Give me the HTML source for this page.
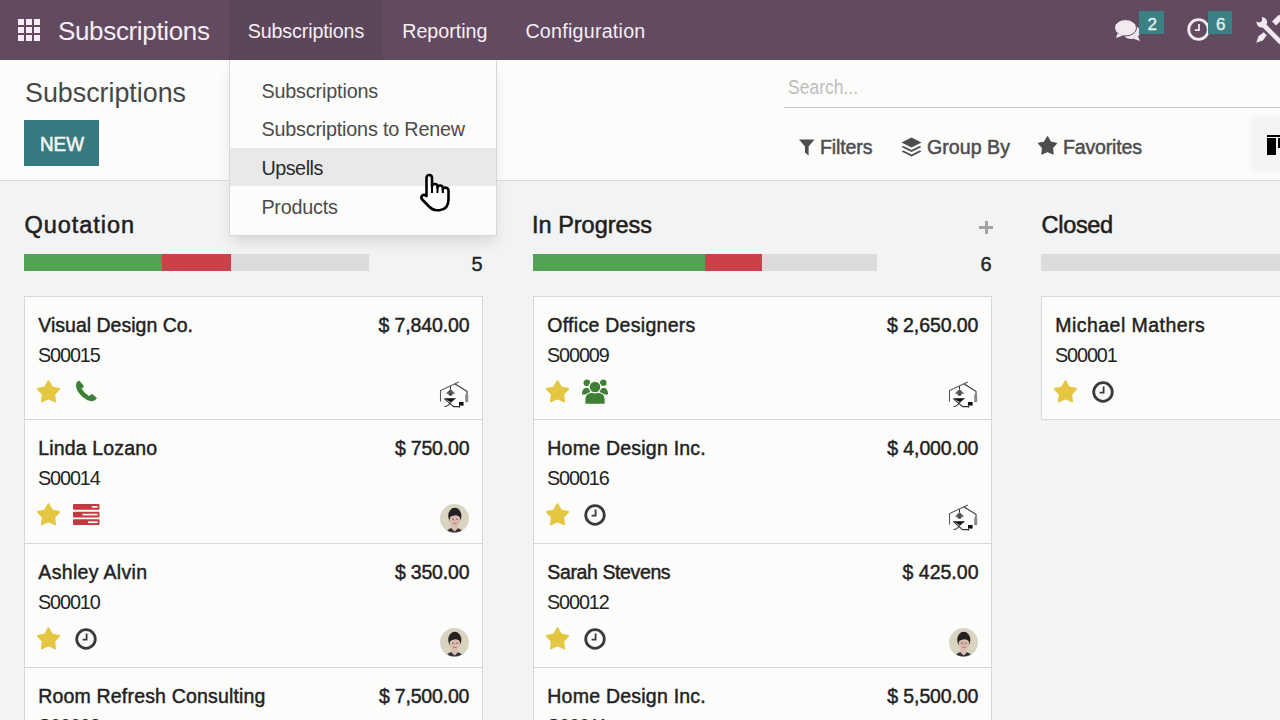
<!DOCTYPE html>
<html><head><meta charset="utf-8">
<style>
*{margin:0;padding:0;box-sizing:border-box}
html,body{width:1280px;height:720px;overflow:hidden;background:#f2f3f4;font-family:"Liberation Sans",sans-serif}
.a{position:absolute;white-space:nowrap;line-height:1}
#nav{position:absolute;left:0;top:0;width:1280px;height:60px;background:#624b60}
#navact{position:absolute;left:229px;top:0;width:154px;height:60px;background:#5c4659}
#cp{position:absolute;left:0;top:60px;width:1280px;height:121px;background:#fcfcfb;border-bottom:1px solid #d9d9db}
.card{position:absolute;width:459px;background:#fcfcfb;border:1px solid #d7d8da}
#dd{position:absolute;left:229px;top:60px;width:268px;height:176px;background:#fcfcfb;border:1px solid #d6d6d6;border-top:none;box-shadow:0 8px 14px -3px rgba(0,0,0,.13)}
</style></head><body>
<div id="nav"><div id="navact"></div>
<svg class="a" style="left:18px;top:19px" width="22" height="22" viewBox="0 0 22 22" fill="#f4edf2"><rect x="0" y="0" width="6" height="6"/><rect x="8" y="0" width="6" height="6"/><rect x="16" y="0" width="6" height="6"/><rect x="0" y="8" width="6" height="6"/><rect x="8" y="8" width="6" height="6"/><rect x="16" y="8" width="6" height="6"/><rect x="0" y="16" width="6" height="6"/><rect x="8" y="16" width="6" height="6"/><rect x="16" y="16" width="6" height="6"/></svg>
<div class="a" style="left:58.00px;top:18.29px;font-size:26px;color:#f6eef4;font-weight:normal;letter-spacing:-0.342px;">Subscriptions</div>
<div class="a" style="left:247.70px;top:21.72px;font-size:19.7px;color:#f6eef4;font-weight:normal;letter-spacing:-0.133px;">Subscriptions</div>
<div class="a" style="left:402.20px;top:21.72px;font-size:19.7px;color:#f6eef4;font-weight:normal;letter-spacing:-0.013px;">Reporting</div>
<div class="a" style="left:525.40px;top:21.72px;font-size:19.7px;color:#f6eef4;font-weight:normal;letter-spacing:0.233px;">Configuration</div>
<svg class="a" style="left:1113px;top:18px" width="30" height="25" viewBox="0 0 30 25"><path d="M16 7.5 Q23 6 26.5 11 Q28 15 25 18.5 L27 23 L20.5 20.8 Q14 21.5 11 18 Z" fill="#efe6ec"/><ellipse cx="12.5" cy="9.8" rx="11" ry="8.2" fill="#f2eaef" stroke="#4e3c4c" stroke-width="0.9"/><path d="M4.5 15.5 L3 20 L10.5 17.2 Z" fill="#f2eaef"/></svg>
<div class="a" style="left:1139px;top:11px;width:25px;height:23px;background:#3b8084"></div>
<svg class="a" style="left:1187px;top:18px" width="23" height="23" viewBox="0 0 23 23"><circle cx="11.5" cy="11.5" r="9.8" fill="none" stroke="#f3eaf0" stroke-width="2.8"/><path d="M12 6V12.2H7.8" fill="none" stroke="#f3eaf0" stroke-width="1.8"/></svg>
<div class="a" style="left:1208px;top:11px;width:24px;height:23px;background:#3b8084"></div>
<svg class="a" style="left:1245px;top:10px" width="35" height="35" viewBox="0 0 35 35"><g fill="#f3e9f1"><path d="M18 14.5 L36 32.5" stroke="#f3e9f1" stroke-width="4.6"/><circle cx="16.8" cy="12.2" r="5.3"/><path d="M29 13.5 L36 6.5" stroke="#f3e9f1" stroke-width="5.6"/><path d="M11.2 32.8 L13.6 26.2 L18.8 22.2 L21.8 25.2 L17.8 30.4 Z"/></g><circle cx="14" cy="9.2" r="3.1" fill="#624b60"/><path d="M14 9.2 L10 5 L15.8 4.5 Z" fill="#624b60"/></svg>
<div class="a" style="left:1147.50px;top:15.61px;font-size:17px;color:#e6f3f0;font-weight:normal;letter-spacing:0.000px;-webkit-text-stroke:0.3px #e6f3f0;">2</div>
<div class="a" style="left:1216.00px;top:15.61px;font-size:17px;color:#e6f3f0;font-weight:normal;letter-spacing:0.000px;-webkit-text-stroke:0.3px #e6f3f0;">6</div>
</div>
<div id="cp"></div>
<div class="a" style="left:24.90px;top:77.67px;font-size:28.5px;color:#474747;font-weight:normal;letter-spacing:0.000px;transform:scaleX(0.9410);transform-origin:0.00px 0;">Subscriptions</div>
<div class="a" style="left:24px;top:120px;width:75px;height:46px;background:#37797e"></div>
<div class="a" style="left:39.90px;top:134.47px;font-size:20px;color:#f4f6f6;font-weight:normal;letter-spacing:0.000px;-webkit-text-stroke:0.6px #f4f6f6;transform:scaleX(0.9422);transform-origin:0.00px 0;">NEW</div>
<div class="a" style="left:784px;top:106.5px;width:496px;height:1px;background:#c9c9cb"></div>
<div class="a" style="left:788.00px;top:77.07px;font-size:20px;color:#bdbdbe;font-weight:normal;letter-spacing:0.000px;transform:scaleX(0.8750);transform-origin:0.00px 0;">Search...</div>
<svg class="a" style="left:799px;top:139px" width="16" height="17" viewBox="0 0 16 17"><path d="M0 0.5 H15.5 L9.6 7.5 V16.5 L6 13.5 V7.5 Z" fill="#4d4d4f"/></svg>
<div class="a" style="left:820.00px;top:137.71px;font-size:19.6px;color:#4d4d4f;font-weight:normal;letter-spacing:-0.150px;-webkit-text-stroke:0.5px #4d4d4f;">Filters</div>
<svg class="a" style="left:901px;top:137px" width="21" height="20" viewBox="0 0 21 20"><path d="M10.5 0.5 L20.5 5.5 L10.5 10.5 L0.5 5.5 Z" fill="#4d4d4f"/><path d="M2.5 9 L0.5 10 L10.5 15 L20.5 10 L18.5 9 L10.5 13 Z" fill="#4d4d4f"/><path d="M2.5 13.5 L0.5 14.5 L10.5 19.5 L20.5 14.5 L18.5 13.5 L10.5 17.5 Z" fill="#4d4d4f"/></svg>
<div class="a" style="left:927.00px;top:137.71px;font-size:19.6px;color:#4d4d4f;font-weight:normal;letter-spacing:0.029px;-webkit-text-stroke:0.5px #4d4d4f;">Group By</div>
<svg class="a" style="left:1038px;top:136px" width="19" height="19" viewBox="0 0 23 23" fill="#4d4d4f" stroke="#4d4d4f"><polygon points="11.50,1.00 15.14,7.38 22.34,8.88 17.40,14.32 18.20,21.62 11.50,18.60 4.80,21.62 5.60,14.32 0.66,8.88 7.86,7.38" stroke-linejoin="round" stroke-width="1.6"/></svg>
<div class="a" style="left:1063.00px;top:137.71px;font-size:19.6px;color:#4d4d4f;font-weight:normal;letter-spacing:-0.200px;-webkit-text-stroke:0.5px #4d4d4f;">Favorites</div>
<div class="a" style="left:1254px;top:120px;width:30px;height:49px;background:#f3f3f3;box-shadow:0 0 6px 3px #f3f3f3"></div>
<div class="a" style="left:1266.5px;top:135px;width:14px;height:2px;background:#000"></div><div class="a" style="left:1266.5px;top:138.2px;width:9px;height:16.8px;background:#000"></div><div class="a" style="left:1277.7px;top:138.2px;width:3px;height:10px;background:#000"></div><div class="a" style="left:24.60px;top:213.51px;font-size:23.5px;color:#1f1f1f;font-weight:normal;letter-spacing:0.938px;-webkit-text-stroke:0.55px #1f1f1f;">Quotation</div>
<div class="a" style="left:24px;top:254px;width:138px;height:17px;background:#52a354"></div>
<div class="a" style="left:162px;top:254px;width:69px;height:17px;background:#c9424a"></div>
<div class="a" style="left:231px;top:254px;width:138px;height:17px;background:#dcdcde"></div>
<div class="a" style="left:471.40px;top:253.67px;font-size:20px;color:#222;font-weight:normal;letter-spacing:0.000px;-webkit-text-stroke:0.4px #222;">5</div>
<div class="a" style="left:532.10px;top:213.51px;font-size:23.5px;color:#1f1f1f;font-weight:normal;letter-spacing:-0.020px;-webkit-text-stroke:0.55px #1f1f1f;">In Progress</div>
<div class="a" style="left:533px;top:254px;width:172px;height:17px;background:#52a354"></div>
<div class="a" style="left:705px;top:254px;width:57px;height:17px;background:#c9424a"></div>
<div class="a" style="left:762px;top:254px;width:115px;height:17px;background:#dcdcde"></div>
<div class="a" style="left:980.40px;top:253.67px;font-size:20px;color:#222;font-weight:normal;letter-spacing:0.000px;-webkit-text-stroke:0.4px #222;">6</div>
<div class="a" style="left:979px;top:220.5px;width:14px;height:3px;background:#a3a3a5;margin-top:5px"></div><div class="a" style="left:984.5px;top:220.5px;width:3px;height:13px;background:#a3a3a5"></div>
<div class="a" style="left:1041.60px;top:213.51px;font-size:23.5px;color:#1f1f1f;font-weight:normal;letter-spacing:-0.320px;-webkit-text-stroke:0.55px #1f1f1f;">Closed</div>
<div class="a" style="left:1041px;top:254px;width:345px;height:17px;background:#dcdcde"></div>
<div class="card" style="left:24px;top:296px;height:124px"></div>
<div class="card" style="left:24px;top:419px;height:125px"></div>
<div class="card" style="left:24px;top:543px;height:125px"></div>
<div class="card" style="left:24px;top:667px;height:124px"></div>
<div class="a" style="left:38.30px;top:315.89px;font-size:19.5px;color:#222;font-weight:normal;letter-spacing:0.006px;-webkit-text-stroke:0.45px #222;">Visual Design Co.</div>
<div class="a" style="left:378.50px;top:315.89px;font-size:19.5px;color:#222;font-weight:normal;letter-spacing:-0.133px;-webkit-text-stroke:0.45px #222;">$ 7,840.00</div>
<div class="a" style="left:38.00px;top:346.24px;font-size:19.8px;color:#222;font-weight:normal;letter-spacing:-1.093px;">S00015</div>
<svg class="a" style="left:37.3px;top:380px" width="23" height="23" viewBox="0 0 23 23" fill="#e5c640" stroke="#e5c640"><polygon points="11.50,1.00 15.14,7.38 22.34,8.88 17.40,14.32 18.20,21.62 11.50,18.60 4.80,21.62 5.60,14.32 0.66,8.88 7.86,7.38" stroke-linejoin="round" stroke-width="1.6"/></svg>
<svg class="a" style="left:72px;top:377px" width="28" height="28" viewBox="0 0 28 28"><path d="M7.2 3.9 Q4.2 4.4 4.2 8.5 Q4.8 14.8 10.5 19.6 Q15 23.6 19.5 24 Q23.6 23.6 24.5 21 L20.2 17.3 L17 19.3 Q12.2 16.6 9.3 11.8 L11.7 9 Z" fill="#3a8035" stroke="#3a8035" stroke-width="0.6" stroke-linejoin="round"/></svg>
<svg class="a" style="left:439px;top:381px" width="30" height="28" viewBox="0 0 30 28"><g fill="none" stroke="#333" stroke-width="1.05">
<path d="M1.5 20.5 V9.6 L19.8 1.1" stroke="#555"/><path d="M16 3 L28 10.4 V13"/><path d="M11.5 5.2 V8.2"/>
<path d="M5.3 17.6 L14.6 25.6 H21"/><path d="M15.2 18 L9 24.3 Q7.5 25.4 5.5 25.4"/>
</g><path d="M6.8 12.7 L11.5 8 L16.2 12.7 Z" fill="#555"/><ellipse cx="11.5" cy="13.4" rx="2" ry="1.3" fill="#444"/>
<path d="M5.2 17.2 H17.4 L11.4 21 Z" fill="#111"/><rect x="20" y="21" width="4.6" height="3.6" fill="#111"/><path d="M20.6 24.4 V26.6" stroke="#333" stroke-width="1"/>
<rect x="26.2" y="13" width="3" height="8.2" rx="1" fill="#8a8a8a"/></svg>
<div class="a" style="left:38.30px;top:438.89px;font-size:19.5px;color:#222;font-weight:normal;letter-spacing:0.150px;-webkit-text-stroke:0.45px #222;">Linda Lozano</div>
<div class="a" style="left:394.90px;top:438.89px;font-size:19.5px;color:#222;font-weight:normal;letter-spacing:-0.186px;-webkit-text-stroke:0.45px #222;">$ 750.00</div>
<div class="a" style="left:38.00px;top:469.24px;font-size:19.8px;color:#222;font-weight:normal;letter-spacing:-1.093px;">S00014</div>
<svg class="a" style="left:37.3px;top:503px" width="23" height="23" viewBox="0 0 23 23" fill="#e5c640" stroke="#e5c640"><polygon points="11.50,1.00 15.14,7.38 22.34,8.88 17.40,14.32 18.20,21.62 11.50,18.60 4.80,21.62 5.60,14.32 0.66,8.88 7.86,7.38" stroke-linejoin="round" stroke-width="1.6"/></svg>
<svg class="a" style="left:73px;top:504px" width="27" height="22" viewBox="0 0 27 22"><g fill="#c23a40"><rect x="0" y="0" width="26.5" height="5.8" rx="1"/><rect x="0" y="7.7" width="26.5" height="5.8" rx="1"/><rect x="0" y="15.3" width="26.5" height="5.8" rx="1"/></g><g fill="#f6f0e8"><rect x="18.8" y="2" width="5.8" height="1.8"/><rect x="9.4" y="9.7" width="15.2" height="1.8"/><rect x="15" y="17.3" width="9.6" height="1.8"/></g></svg>
<svg class="a" style="left:439.5px;top:504px" width="29" height="29" viewBox="0 0 29 29"><defs><clipPath id="c439504"><circle cx="14.5" cy="14.5" r="14"/></clipPath></defs><circle cx="14.5" cy="14.5" r="14.2" fill="#d9d4bf" stroke="#d2d2da" stroke-width="0.6"/><g clip-path="url(#c439504)">
<path d="M5.5 29 Q7.5 24 14 23.4 Q21 23.8 23.5 29 Z" fill="#353234"/>
<path d="M11.2 20.5 L11.8 25 L14.8 27.5 L17.6 24.8 L17.8 20 Z" fill="#dcbdb4"/>
<ellipse cx="14.8" cy="11.8" rx="6.6" ry="8" fill="#252122"/>
<ellipse cx="14.9" cy="15.6" rx="5.3" ry="6.6" fill="#dcbbb1"/>
<path d="M9.4 13.8 Q9.2 8.4 14.8 8.2 Q20.6 8.4 20.4 13.4 Q17.5 10.8 14.2 11.4 Q11.5 11.8 9.4 13.8 Z" fill="#252122"/>
<ellipse cx="12.9" cy="15" rx="0.9" ry="0.6" fill="#4a3c3c"/><ellipse cx="17" cy="15" rx="0.9" ry="0.6" fill="#4a3c3c"/><path d="M13.2 19 Q15 20.4 16.8 19" stroke="#b07070" stroke-width="0.9" fill="none"/><path d="M14.6 15 L14.2 17 L15.2 17" stroke="#b89a92" stroke-width="0.6" fill="none"/>
</g></svg>
<div class="a" style="left:38.30px;top:562.89px;font-size:19.5px;color:#222;font-weight:normal;letter-spacing:0.327px;-webkit-text-stroke:0.45px #222;">Ashley Alvin</div>
<div class="a" style="left:394.90px;top:562.89px;font-size:19.5px;color:#222;font-weight:normal;letter-spacing:-0.186px;-webkit-text-stroke:0.45px #222;">$ 350.00</div>
<div class="a" style="left:38.00px;top:593.24px;font-size:19.8px;color:#222;font-weight:normal;letter-spacing:-1.093px;">S00010</div>
<svg class="a" style="left:37.3px;top:627px" width="23" height="23" viewBox="0 0 23 23" fill="#e5c640" stroke="#e5c640"><polygon points="11.50,1.00 15.14,7.38 22.34,8.88 17.40,14.32 18.20,21.62 11.50,18.60 4.80,21.62 5.60,14.32 0.66,8.88 7.86,7.38" stroke-linejoin="round" stroke-width="1.6"/></svg>
<svg class="a" style="left:74.5px;top:628px" width="22" height="22" viewBox="0 0 22 22"><circle cx="11" cy="11" r="9.3" fill="none" stroke="#3a3a3a" stroke-width="2.8"/><path d="M11.6 5.6V11.6H7.6" fill="none" stroke="#3a3a3a" stroke-width="1.8"/></svg>
<svg class="a" style="left:439.5px;top:628px" width="29" height="29" viewBox="0 0 29 29"><defs><clipPath id="c439628"><circle cx="14.5" cy="14.5" r="14"/></clipPath></defs><circle cx="14.5" cy="14.5" r="14.2" fill="#d9d4bf" stroke="#d2d2da" stroke-width="0.6"/><g clip-path="url(#c439628)">
<path d="M5.5 29 Q7.5 24 14 23.4 Q21 23.8 23.5 29 Z" fill="#353234"/>
<path d="M11.2 20.5 L11.8 25 L14.8 27.5 L17.6 24.8 L17.8 20 Z" fill="#dcbdb4"/>
<ellipse cx="14.8" cy="11.8" rx="6.6" ry="8" fill="#252122"/>
<ellipse cx="14.9" cy="15.6" rx="5.3" ry="6.6" fill="#dcbbb1"/>
<path d="M9.4 13.8 Q9.2 8.4 14.8 8.2 Q20.6 8.4 20.4 13.4 Q17.5 10.8 14.2 11.4 Q11.5 11.8 9.4 13.8 Z" fill="#252122"/>
<ellipse cx="12.9" cy="15" rx="0.9" ry="0.6" fill="#4a3c3c"/><ellipse cx="17" cy="15" rx="0.9" ry="0.6" fill="#4a3c3c"/><path d="M13.2 19 Q15 20.4 16.8 19" stroke="#b07070" stroke-width="0.9" fill="none"/><path d="M14.6 15 L14.2 17 L15.2 17" stroke="#b89a92" stroke-width="0.6" fill="none"/>
</g></svg>
<div class="a" style="left:38.30px;top:686.89px;font-size:19.5px;color:#222;font-weight:normal;letter-spacing:0.173px;-webkit-text-stroke:0.45px #222;">Room Refresh Consulting</div>
<div class="a" style="left:378.90px;top:686.89px;font-size:19.5px;color:#222;font-weight:normal;letter-spacing:-0.178px;-webkit-text-stroke:0.45px #222;">$ 7,500.00</div>
<div class="a" style="left:38.00px;top:717.24px;font-size:19.8px;color:#222;font-weight:normal;letter-spacing:-1.093px;">S00008</div>
<div class="card" style="left:533px;top:296px;height:124px"></div>
<div class="card" style="left:533px;top:419px;height:125px"></div>
<div class="card" style="left:533px;top:543px;height:125px"></div>
<div class="card" style="left:533px;top:667px;height:124px"></div>
<div class="a" style="left:547.30px;top:315.89px;font-size:19.5px;color:#222;font-weight:normal;letter-spacing:0.280px;-webkit-text-stroke:0.45px #222;">Office Designers</div>
<div class="a" style="left:887.00px;top:315.89px;font-size:19.5px;color:#222;font-weight:normal;letter-spacing:-0.078px;-webkit-text-stroke:0.45px #222;">$ 2,650.00</div>
<div class="a" style="left:547.00px;top:346.24px;font-size:19.8px;color:#222;font-weight:normal;letter-spacing:-1.093px;">S00009</div>
<svg class="a" style="left:546.3px;top:380px" width="23" height="23" viewBox="0 0 23 23" fill="#e5c640" stroke="#e5c640"><polygon points="11.50,1.00 15.14,7.38 22.34,8.88 17.40,14.32 18.20,21.62 11.50,18.60 4.80,21.62 5.60,14.32 0.66,8.88 7.86,7.38" stroke-linejoin="round" stroke-width="1.6"/></svg>
<svg class="a" style="left:580.5px;top:377.6px" width="28" height="27" viewBox="0 0 28 27"><g fill="#3f7f36" stroke="#fcfcfb" stroke-width="1.2">
<circle cx="5.8" cy="4.8" r="3.9"/><circle cx="22.2" cy="4.8" r="3.9"/>
<path d="M0.3 17 Q0.3 9.2 5.5 9.2 Q10.5 9.2 10.5 17 Z"/><path d="M17.5 17 Q17.5 9.2 22.5 9.2 Q27.7 9.2 27.7 17 Z"/>
<path d="M3.8 26.4 V21 Q3.8 14 14 14 Q24.2 14 24.2 21 V26.4 Z"/><circle cx="14" cy="9" r="5.9"/></g></svg>
<svg class="a" style="left:948px;top:381px" width="30" height="28" viewBox="0 0 30 28"><g fill="none" stroke="#333" stroke-width="1.05">
<path d="M1.5 20.5 V9.6 L19.8 1.1" stroke="#555"/><path d="M16 3 L28 10.4 V13"/><path d="M11.5 5.2 V8.2"/>
<path d="M5.3 17.6 L14.6 25.6 H21"/><path d="M15.2 18 L9 24.3 Q7.5 25.4 5.5 25.4"/>
</g><path d="M6.8 12.7 L11.5 8 L16.2 12.7 Z" fill="#555"/><ellipse cx="11.5" cy="13.4" rx="2" ry="1.3" fill="#444"/>
<path d="M5.2 17.2 H17.4 L11.4 21 Z" fill="#111"/><rect x="20" y="21" width="4.6" height="3.6" fill="#111"/><path d="M20.6 24.4 V26.6" stroke="#333" stroke-width="1"/>
<rect x="26.2" y="13" width="3" height="8.2" rx="1" fill="#8a8a8a"/></svg>
<div class="a" style="left:547.30px;top:438.89px;font-size:19.5px;color:#222;font-weight:normal;letter-spacing:0.233px;-webkit-text-stroke:0.45px #222;">Home Design Inc.</div>
<div class="a" style="left:887.30px;top:438.89px;font-size:19.5px;color:#222;font-weight:normal;letter-spacing:-0.111px;-webkit-text-stroke:0.45px #222;">$ 4,000.00</div>
<div class="a" style="left:547.00px;top:469.24px;font-size:19.8px;color:#222;font-weight:normal;letter-spacing:-1.093px;">S00016</div>
<svg class="a" style="left:546.3px;top:503px" width="23" height="23" viewBox="0 0 23 23" fill="#e5c640" stroke="#e5c640"><polygon points="11.50,1.00 15.14,7.38 22.34,8.88 17.40,14.32 18.20,21.62 11.50,18.60 4.80,21.62 5.60,14.32 0.66,8.88 7.86,7.38" stroke-linejoin="round" stroke-width="1.6"/></svg>
<svg class="a" style="left:583.5px;top:504px" width="22" height="22" viewBox="0 0 22 22"><circle cx="11" cy="11" r="9.3" fill="none" stroke="#3a3a3a" stroke-width="2.8"/><path d="M11.6 5.6V11.6H7.6" fill="none" stroke="#3a3a3a" stroke-width="1.8"/></svg>
<svg class="a" style="left:948px;top:504px" width="30" height="28" viewBox="0 0 30 28"><g fill="none" stroke="#333" stroke-width="1.05">
<path d="M1.5 20.5 V9.6 L19.8 1.1" stroke="#555"/><path d="M16 3 L28 10.4 V13"/><path d="M11.5 5.2 V8.2"/>
<path d="M5.3 17.6 L14.6 25.6 H21"/><path d="M15.2 18 L9 24.3 Q7.5 25.4 5.5 25.4"/>
</g><path d="M6.8 12.7 L11.5 8 L16.2 12.7 Z" fill="#555"/><ellipse cx="11.5" cy="13.4" rx="2" ry="1.3" fill="#444"/>
<path d="M5.2 17.2 H17.4 L11.4 21 Z" fill="#111"/><rect x="20" y="21" width="4.6" height="3.6" fill="#111"/><path d="M20.6 24.4 V26.6" stroke="#333" stroke-width="1"/>
<rect x="26.2" y="13" width="3" height="8.2" rx="1" fill="#8a8a8a"/></svg>
<div class="a" style="left:547.30px;top:562.89px;font-size:19.5px;color:#222;font-weight:normal;letter-spacing:-0.383px;-webkit-text-stroke:0.45px #222;">Sarah Stevens</div>
<div class="a" style="left:902.50px;top:562.89px;font-size:19.5px;color:#222;font-weight:normal;letter-spacing:0.014px;-webkit-text-stroke:0.45px #222;">$ 425.00</div>
<div class="a" style="left:547.00px;top:593.24px;font-size:19.8px;color:#222;font-weight:normal;letter-spacing:-1.093px;">S00012</div>
<svg class="a" style="left:546.3px;top:627px" width="23" height="23" viewBox="0 0 23 23" fill="#e5c640" stroke="#e5c640"><polygon points="11.50,1.00 15.14,7.38 22.34,8.88 17.40,14.32 18.20,21.62 11.50,18.60 4.80,21.62 5.60,14.32 0.66,8.88 7.86,7.38" stroke-linejoin="round" stroke-width="1.6"/></svg>
<svg class="a" style="left:583.5px;top:628px" width="22" height="22" viewBox="0 0 22 22"><circle cx="11" cy="11" r="9.3" fill="none" stroke="#3a3a3a" stroke-width="2.8"/><path d="M11.6 5.6V11.6H7.6" fill="none" stroke="#3a3a3a" stroke-width="1.8"/></svg>
<svg class="a" style="left:948.5px;top:628px" width="29" height="29" viewBox="0 0 29 29"><defs><clipPath id="c948628"><circle cx="14.5" cy="14.5" r="14"/></clipPath></defs><circle cx="14.5" cy="14.5" r="14.2" fill="#d9d4bf" stroke="#d2d2da" stroke-width="0.6"/><g clip-path="url(#c948628)">
<path d="M5.5 29 Q7.5 24 14 23.4 Q21 23.8 23.5 29 Z" fill="#353234"/>
<path d="M11.2 20.5 L11.8 25 L14.8 27.5 L17.6 24.8 L17.8 20 Z" fill="#dcbdb4"/>
<ellipse cx="14.8" cy="11.8" rx="6.6" ry="8" fill="#252122"/>
<ellipse cx="14.9" cy="15.6" rx="5.3" ry="6.6" fill="#dcbbb1"/>
<path d="M9.4 13.8 Q9.2 8.4 14.8 8.2 Q20.6 8.4 20.4 13.4 Q17.5 10.8 14.2 11.4 Q11.5 11.8 9.4 13.8 Z" fill="#252122"/>
<ellipse cx="12.9" cy="15" rx="0.9" ry="0.6" fill="#4a3c3c"/><ellipse cx="17" cy="15" rx="0.9" ry="0.6" fill="#4a3c3c"/><path d="M13.2 19 Q15 20.4 16.8 19" stroke="#b07070" stroke-width="0.9" fill="none"/><path d="M14.6 15 L14.2 17 L15.2 17" stroke="#b89a92" stroke-width="0.6" fill="none"/>
</g></svg>
<div class="a" style="left:547.30px;top:686.89px;font-size:19.5px;color:#222;font-weight:normal;letter-spacing:0.233px;-webkit-text-stroke:0.45px #222;">Home Design Inc.</div>
<div class="a" style="left:887.30px;top:686.89px;font-size:19.5px;color:#222;font-weight:normal;letter-spacing:-0.111px;-webkit-text-stroke:0.45px #222;">$ 5,500.00</div>
<div class="a" style="left:547.00px;top:717.24px;font-size:19.8px;color:#222;font-weight:normal;letter-spacing:-1.069px;">S00011</div>
<div class="card" style="left:1041px;top:296px;height:124px"></div>
<div class="a" style="left:1055.30px;top:315.89px;font-size:19.5px;color:#222;font-weight:normal;letter-spacing:0.457px;-webkit-text-stroke:0.45px #222;">Michael Mathers</div>
<div class="a" style="left:1055.00px;top:346.24px;font-size:19.8px;color:#222;font-weight:normal;letter-spacing:-1.093px;">S00001</div>
<svg class="a" style="left:1054.3px;top:380px" width="23" height="23" viewBox="0 0 23 23" fill="#e5c640" stroke="#e5c640"><polygon points="11.50,1.00 15.14,7.38 22.34,8.88 17.40,14.32 18.20,21.62 11.50,18.60 4.80,21.62 5.60,14.32 0.66,8.88 7.86,7.38" stroke-linejoin="round" stroke-width="1.6"/></svg>
<svg class="a" style="left:1091.5px;top:381px" width="22" height="22" viewBox="0 0 22 22"><circle cx="11" cy="11" r="9.3" fill="none" stroke="#3a3a3a" stroke-width="2.8"/><path d="M11.6 5.6V11.6H7.6" fill="none" stroke="#3a3a3a" stroke-width="1.8"/></svg>
<div id="dd"></div>
<div class="a" style="left:230px;top:148px;width:266px;height:38px;background:#e9e9e9"></div>
<div class="a" style="left:261.40px;top:81.54px;font-size:19.8px;color:#4b4b4b;font-weight:normal;letter-spacing:-0.158px;">Subscriptions</div>
<div class="a" style="left:261.40px;top:120.04px;font-size:19.8px;color:#4b4b4b;font-weight:normal;letter-spacing:-0.195px;">Subscriptions to Renew</div>
<div class="a" style="left:261.40px;top:159.24px;font-size:19.8px;color:#2a2a2a;font-weight:normal;letter-spacing:-0.483px;">Upsells</div>
<div class="a" style="left:261.40px;top:198.24px;font-size:19.8px;color:#4b4b4b;font-weight:normal;letter-spacing:-0.229px;">Products</div>
<svg class="a" style="left:418.7px;top:172.8px" width="36" height="40" viewBox="0 0 36 40"><path d="M7.5 5 Q7.5 2 10.2 2 Q13 2 13 5 V13.5 Q13.2 11 15.8 11 Q18.4 11 18.5 13.5 V14.8 Q18.8 12.5 21.2 12.5 Q23.6 12.5 23.8 15 V16.5 Q24.2 14.5 26.5 14.5 Q29.5 14.8 29.5 18 V26.5 Q29.5 36.5 20.5 37.2 H17.5 Q13.5 37 10 33.5 L3.2 26.5 Q1.5 24.5 3 22.8 Q5 21 7.5 23 Z" fill="#fff" stroke="#000" stroke-width="2.6" stroke-linejoin="round"/><path d="M13 13.5 V20 M18.5 14.8 V20 M23.8 16.5 V20" stroke="#000" stroke-width="2"/></svg>
</body></html>
